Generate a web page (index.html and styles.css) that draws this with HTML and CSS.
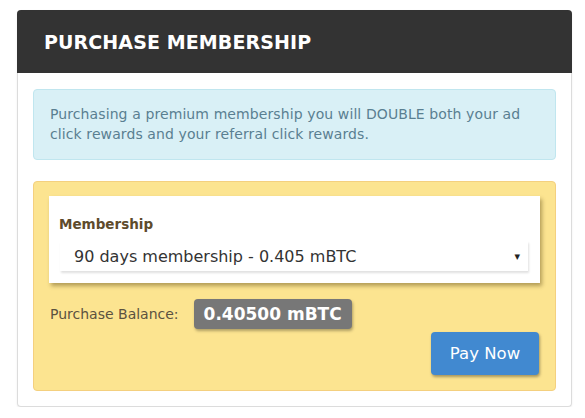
FILE: index.html
```html
<!DOCTYPE html>
<html>
<head>
<meta charset="utf-8">
<link rel="stylesheet" href="styles.css">
</head>
<body>
<div class="card">
  <div class="card-header"><h2 class="title">PURCHASE MEMBERSHIP</h2></div>
  <div class="card-body">
    <div class="alert">Purchasing a premium membership you will DOUBLE both your ad click rewards and your referral click rewards.</div>
    <div class="well">
      <div class="form-box">
        <div class="label">Membership</div>
        <div class="select"><span class="select-text">90 days membership - 0.405 mBTC</span><span class="arrow">&#9662;</span></div>
      </div>
      <div class="balance-row">
        <span class="balance-label">Purchase Balance:</span>
        <span class="badge">0.40500 mBTC</span>
      </div>
      <div class="actions"><button class="btn">Pay Now</button></div>
    </div>
  </div>
</div>
</body>
</html>
```
FILE: styles.css
```css
html, body { margin: 0; padding: 0; background: #fff; }
body { font-family: "DejaVu Sans", "Liberation Sans", sans-serif; }
.card {
  margin: 10px 0 0 17px;
  width: 553px;
  border: 1px solid #dcdcdc;
  border-top: none;
  border-radius: 4px;
  box-shadow: 0 1px 2px rgba(0,0,0,0.08);
}
.card-header {
  height: 63px;
  background: #333333;
  border-radius: 4px 4px 0 0;
  display: flex;
  align-items: center;
  padding-left: 27px;
  margin: 0 -1px;
}
.title {
  margin: 0;
  color: #fff;
  font-size: 19px;
  font-weight: bold;
  letter-spacing: 0.1px;
}
.card-body { padding: 16px 15px 15px 15px; }
.alert {
  background: #d9f0f6;
  border: 1px solid #c0e6ef;
  border-radius: 4px;
  color: #5a7f91;
  font-size: 14px;
  letter-spacing: 0.1px;
  line-height: 20px;
  padding: 14px 16px 15px 16px;
}
.well {
  margin-top: 21px;
  background: #fce490;
  border: 1px solid #f4d07f;
  border-radius: 4px;
  padding: 14px 15px 15px 15px;
}
.form-box {
  background: #fff;
  box-shadow: 2px 3px 4px rgba(90,70,20,0.45);
  padding: 18px 12px 12px 10px;
}
.label {
  font-size: 13.5px;
  font-weight: bold;
  color: #5e4b2c;
  line-height: 20px;
}
.select {
  margin-top: 7px;
  margin-left: 1px;
  height: 30px;
  display: flex;
  align-items: center;
  justify-content: space-between;
  padding: 0 8px 0 14px;
  box-shadow: 1px 2px 2px rgba(0,0,0,0.12);
  color: #333;
  font-size: 16px;
}
.arrow { font-size: 11px; color: #222; }
.balance-row {
  margin-top: 16px;
  display: flex;
  align-items: center;
  height: 30px;
  padding-left: 1px;
}
.balance-label { font-size: 14px; color: #5b5240; }
.badge {
  margin-left: 15px;
  background: #777777;
  color: #fff;
  font-weight: bold;
  font-size: 17px;
  height: 30px;
  display: inline-flex;
  align-items: center;
  padding: 0 10px;
  border-radius: 4px;
  box-shadow: 1px 2px 3px rgba(0,0,0,0.3);
}
.actions { display: flex; justify-content: flex-end; margin-top: 3px; padding-right: 1px; }
.btn {
  width: 108px;
  height: 43px;
  border: none;
  border-radius: 4px;
  background: #4189d0;
  color: #fff;
  font-family: inherit;
  font-size: 16.5px;
  box-shadow: 1px 2px 3px rgba(0,0,0,0.35);
}
```
